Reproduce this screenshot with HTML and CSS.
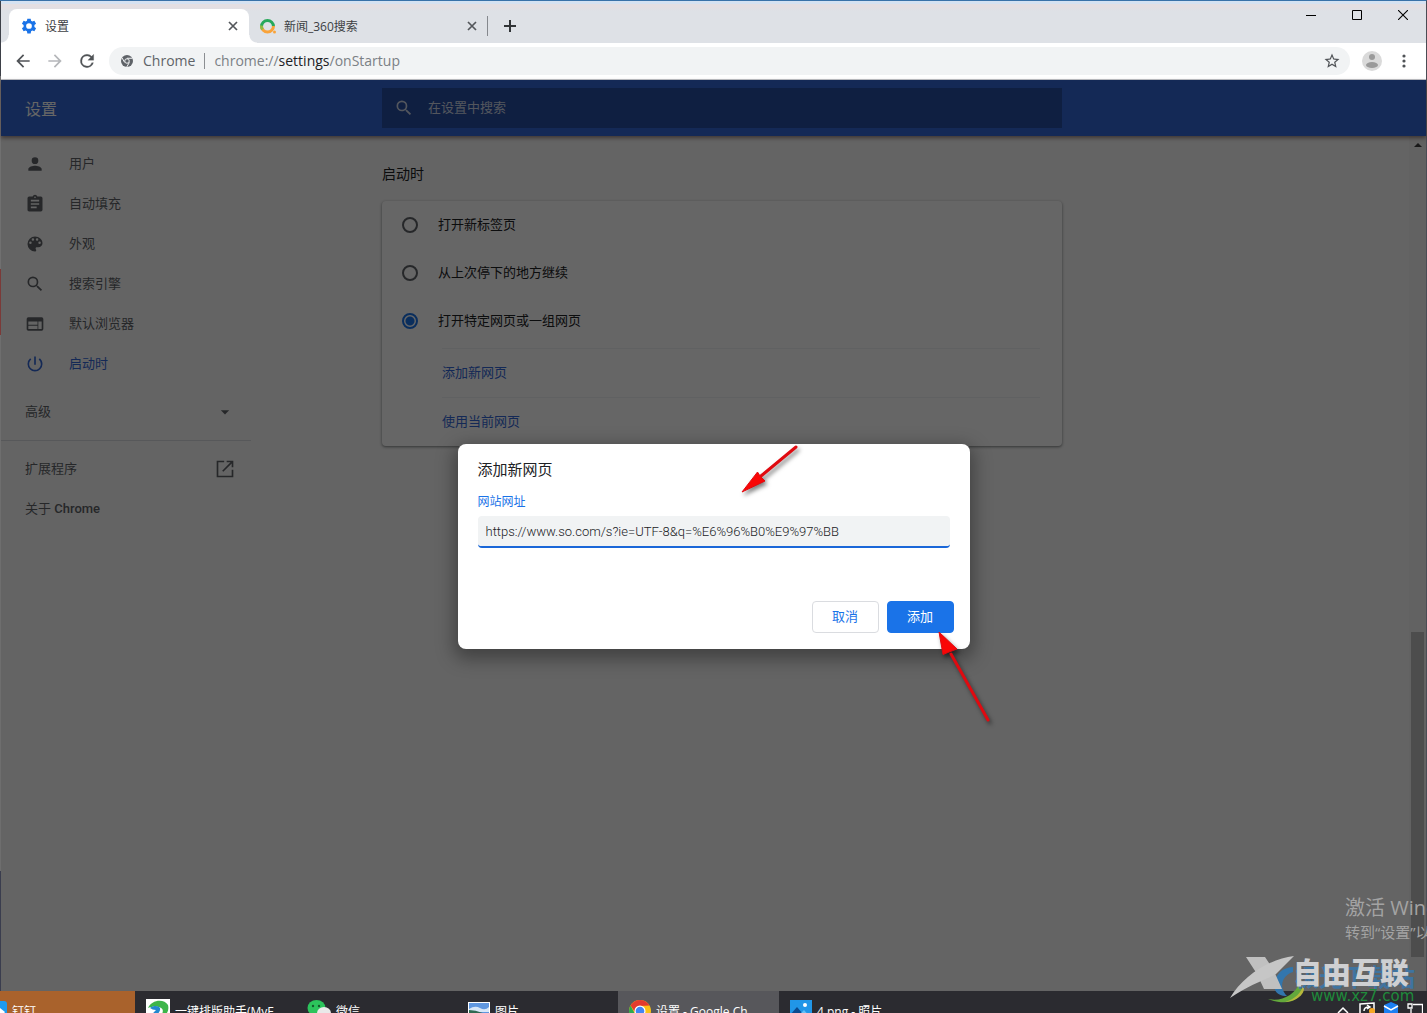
FILE: index.html
```html
<!DOCTYPE html>
<html lang="zh-CN">
<head>
<meta charset="utf-8">
<title>设置</title>
<link rel="stylesheet" href="styles.css">
</head>
<body>
<div class="window">
  <div class="tabstrip">
    <div class="tab tab-active">
      <svg class="icon16" viewBox="0 0 24 24"><path fill="#1a73e8" fill-rule="evenodd" d="M9.5 1h5l.6 3.2 1.9 1.1 3.1-1.1 2.5 4.3-2.5 2.1v2.8l2.5 2.1-2.5 4.3-3.1-1.1-1.9 1.1-.6 3.3h-5l-.6-3.3L7 18.7l-3.1 1.1-2.5-4.3 2.5-2.1v-2.8L1.400 8.500l2.500-4.300L7 5.300l1.900-1.100zM12 7.700a4.300 4.300 0 100 8.600 4.300 4.300 0 000-8.600z"/></svg>
      <span class="tab-title">设置</span>
      <button class="tab-close" aria-label="关闭"><svg width="10" height="10" viewBox="0 0 10 10"><path d="M1 1l8 8M9 1l-8 8" stroke="#54575b" stroke-width="1.700"/></svg></button>
    </div>
    <div class="tab">
      <svg class="icon16" viewBox="0 0 16 16"><g fill="none" stroke-width="3"><path d="M1.500 8.500a6 6 0 0112 0" stroke="#27a95b"/><path d="M1.500 8a6 6 0 0012 0" stroke="#f9a33a"/><path d="M1.500 7.500a6 6 0 001 4" stroke="#8dbb45"/></g><circle cx="14.500" cy="14" r="1.500" fill="#f9a33a"/></svg>
      <span class="tab-title">新闻_360搜索</span>
      <button class="tab-close" aria-label="关闭"><svg width="10" height="10" viewBox="0 0 10 10"><path d="M1 1l8 8M9 1l-8 8" stroke="#54575b" stroke-width="1.700"/></svg></button>
    </div>
    <span class="tab-sep"></span>
    <button class="new-tab" aria-label="新标签页"><svg width="12" height="12" viewBox="0 0 12 12"><path d="M6 0v12M0 6h12" stroke="#303336" stroke-width="2"/></svg></button>
    <div class="caption">
      <button aria-label="最小化"><svg width="10" height="10" viewBox="0 0 10 10"><path d="M0 5.500h10" stroke="#000"/></svg></button>
      <button aria-label="最大化"><svg width="10" height="10" viewBox="0 0 10 10"><path d="M.5.500h9v9h-9z" fill="none" stroke="#000"/></svg></button>
      <button aria-label="关闭窗口"><svg width="10" height="10" viewBox="0 0 10 10"><path d="M0 0l10 10M10 0L0 10" stroke="#000" stroke-width="1.100"/></svg></button>
    </div>
  </div>

  <div class="toolbar">
    <button class="nav" aria-label="后退"><svg width="20" height="20" viewBox="0 0 24 24"><path fill="#505357" d="M20 11H7.830l5.590-5.590L12 4l-8 8 8 8 1.410-1.410L7.830 13H20z"/></svg></button>
    <button class="nav" aria-label="前进"><svg width="20" height="20" viewBox="0 0 24 24"><path fill="#b5b7ba" d="M12 4l-1.410 1.410L16.170 11H4v2h12.170l-5.580 5.590L12 20l8-8z"/></svg></button>
    <button class="nav" aria-label="重新加载"><svg width="20" height="20" viewBox="0 0 24 24"><path fill="#505357" d="M17.650 6.350A7.960 7.960 0 0012 4a8 8 0 107.730 10h-2.080A6 6 0 1112 6c1.660 0 3.140.690 4.220 1.780L13 11h7V4z" stroke="#505357" stroke-width=".3"/></svg></button>
    <div class="omnibox">
      <svg width="12" height="12" viewBox="0 0 24 24"><circle cx="12" cy="12" r="12" fill="#5f6368"/><circle cx="12" cy="12" r="4.500" fill="#5f6368" stroke="#f1f3f4" stroke-width="2"/><path d="M12 6.500h11M7.200 14.800L2 5.500M16.800 14.800L11.500 24" stroke="#f1f3f4" stroke-width="2"/></svg>
      <span class="origin">Chrome</span>
      <span class="omni-sep"></span>
      <div class="url" role="textbox" aria-label="地址">chrome://<b>settings</b>/onStartup</div>
      <button class="star" aria-label="收藏"><svg width="18" height="18" viewBox="0 0 24 24"><path fill="#505357" d="M22 9.240l-7.190-.620L12 2 9.190 8.630 2 9.240l5.460 4.730L5.820 21 12 17.270 18.180 21l-1.630-7.030zM12 15.400l-3.760 2.270 1-4.280-3.320-2.880 4.380-.380L12 6.100l1.710 4.040 4.380.380-3.320 2.880 1 4.280z"/></svg></button>
    </div>
    <button class="avatar" aria-label="个人资料"><svg width="20" height="20" viewBox="0 0 20 20"><circle cx="10" cy="10" r="10" fill="#dadada"/><circle cx="10" cy="6" r="3" fill="#9a9a9a"/><ellipse cx="10" cy="14" rx="6" ry="3" fill="#9a9a9a"/></svg></button>
    <button class="menu" aria-label="菜单"><svg width="4" height="14" viewBox="0 0 4 14"><g fill="#505357"><circle cx="2" cy="2" r="1.600"/><circle cx="2" cy="7" r="1.600"/><circle cx="2" cy="12" r="1.600"/></g></svg></button>
  </div>

  <div class="page">
    <header class="columns header">
      <h1>设置</h1>
      <label class="search">
        <svg width="20" height="20" viewBox="0 0 24 24"><path fill="currentColor" d="M15.500 14h-.790l-.280-.270A6.470 6.470 0 0016 9.500 6.500 6.500 0 109.500 16c1.610 0 3.090-.590 4.230-1.570l.270.280v.790l5 4.990L20.490 19zm-6 0a4.500 4.500 0 110-9 4.500 4.500 0 010 9z"/></svg>
        <input type="search" placeholder="在设置中搜索" aria-label="在设置中搜索">
      </label>
    </header>

    <div class="columns body">
      <nav class="side">
        <a href="#people"><svg class="icon20" viewBox="0 0 24 24"><path d="M12 12a4 4 0 100-8 4 4 0 000 8zm0 2c-2.670 0-8 1.340-8 4v2h16v-2c0-2.660-5.330-4-8-4z"/></svg>用户</a>
        <a href="#autofill"><svg class="icon20" viewBox="0 0 24 24"><path d="M19 3h-4.180a3 3 0 00-5.640 0H5a2 2 0 00-2 2v14c0 1.100.9 2 2 2h14a2 2 0 002-2V5a2 2 0 00-2-2zm-7 0a1 1 0 110 2 1 1 0 010-2zm2 14H7v-2h7zm3-4H7v-2h10zm0-4H7V7h10z"/></svg>自动填充</a>
        <a href="#appearance"><svg class="icon20" viewBox="0 0 24 24"><path d="M12 3a9 9 0 000 18 1.500 1.500 0 001.500-1.500c0-.390-.150-.740-.390-1.010-.230-.260-.380-.610-.380-.990 0-.830.670-1.500 1.500-1.500H16a5 5 0 005-5c0-4.420-4.030-8-9-8zm-5.500 9a1.500 1.500 0 110-3 1.500 1.500 0 010 3zm3-4a1.500 1.500 0 110-3 1.500 1.500 0 010 3zm5 0a1.500 1.500 0 110-3 1.500 1.500 0 010 3zm3 4a1.500 1.500 0 110-3 1.500 1.500 0 010 3z"/></svg>外观</a>
        <a href="#search"><svg class="icon20" viewBox="0 0 24 24"><path d="M15.500 14h-.790l-.280-.270A6.470 6.470 0 0016 9.500 6.500 6.500 0 109.500 16c1.610 0 3.090-.590 4.230-1.570l.270.280v.790l5 4.990L20.490 19zm-6 0a4.500 4.500 0 110-9 4.500 4.500 0 010 9z"/></svg>搜索引擎</a>
        <a href="#default"><svg class="icon20" viewBox="0 0 24 24"><path d="M20 4H4a2 2 0 00-2 2v12c0 1.100.9 2 2 2h16a2 2 0 002-2V6a2 2 0 00-2-2zm-5 14H4v-4h11zm0-5H4V9h11zm5 5h-4V9h4z"/></svg>默认浏览器</a>
        <a href="#startup" class="current"><svg class="icon20" viewBox="0 0 24 24"><path d="M13 3h-2v10h2zm4.830 2.170l-1.420 1.420A6.920 6.920 0 0119 12a7 7 0 11-11.420-5.420L6.170 5.170A8.930 8.930 0 003 12a9 9 0 0018 0c0-2.740-1.230-5.180-3.170-6.830z"/></svg>启动时</a>
        <button class="advanced">高级<svg class="icon20" viewBox="0 0 24 24"><path d="M7 10l5 5 5-5z"/></svg></button>
        <hr>
        <a href="#extensions" class="plain">扩展程序<svg class="icon20" viewBox="0 0 24 24"><path d="M20 20H4V4h7V2H2v20h20v-9h-2zM14 2v2h4.600l-10 10L10 15.400l10-10V10h2V2z"/></svg></a>
        <a href="#about" class="plain"><span>关于 <b>Chrome</b></span></a>
      </nav>

      <main>
        <h2>启动时</h2>
        <div class="card">
          <label class="option"><input type="radio" name="startup">打开新标签页</label>
          <label class="option"><input type="radio" name="startup">从上次停下的地方继续</label>
          <label class="option"><input type="radio" name="startup" checked>打开特定网页或一组网页</label>
          <div class="sites">
            <div class="site"><a href="#add">添加新网页</a></div>
            <div class="site"><a href="#use">使用当前网页</a></div>
          </div>
        </div>
      </main>

      <div class="scrollbar">
        <svg width="8" height="5" viewBox="0 0 8 5"><path d="M0 5l4-4 4 4z" fill="#404040"/></svg>
        <div class="thumb"></div>
      </div>
    </div>

    <div class="backdrop">
      <form class="dialog" role="dialog" aria-labelledby="dlg-title">
        <h3 id="dlg-title">添加新网页</h3>
        <label for="site-url">网站网址</label>
        <input id="site-url" type="text" value="https://www.so.com/s?ie=UTF-8&amp;q=%E6%96%B0%E9%97%BB">
        <div class="actions">
          <button type="button">取消</button>
          <button type="button" class="primary">添加</button>
        </div>
        <svg class="arrows" width="560" height="300" viewBox="0 0 560 300">
          <g fill="#f90606" stroke="#e00a10">
            <path d="M338 3L303 32" stroke-width="3" stroke-linecap="round"/>
            <path d="M284 48L299.500 28 302 32 307 37z" stroke-width="1"/>
            <path d="M530 276L493 210" stroke-width="3" stroke-linecap="round"/>
            <path d="M481 188L485 210.500 491 208 499 205z" stroke-width="1"/>
          </g>
        </svg>
      </form>
    </div>
  </div>
</div>

<div class="taskbar">
  <div class="task task-first"><svg width="7" height="20" viewBox="0 0 7 20"><path d="M0 0h4q3 0 3 3v17H0z" fill="#1e9bf0"/><path d="M0 7l5 4-3 4H0z" fill="#fff"/></svg><span>钉钉</span></div>
  <div class="task"><svg width="24" height="24" viewBox="0 0 24 24"><path fill="#fff" d="M0 0h24v24H0z"/><path d="M2 9C5 1 18-1 22 6c2 7-4 14-12 16 6-5 9-11 5-13-3-2-8-2-13 0z" fill="#3db54a"/><path d="M4 9c4-3 9-2 10 0 1 4-4 8-11 14 1-6 4-9 7-12-3 0-4-1-6-2z" fill="#2388cf"/></svg><span>一键排版助手(MyE</span></div>
  <div class="task"><svg width="24" height="24" viewBox="0 0 24 24"><ellipse cx="9.500" cy="9" rx="9" ry="8" fill="#2cc45c"/><circle cx="6" cy="7" r="1.200" fill="#145c2d"/><circle cx="12" cy="7" r="1.200" fill="#145c2d"/><ellipse cx="17" cy="14" rx="7" ry="6" fill="#e9e9e9"/></svg><span>微信</span></div>
  <div class="task"><svg width="22" height="18" viewBox="0 0 22 18"><path fill="#fff" d="M0 0h22v18H0z"/><path fill="#5f97e0" d="M1 1h20v16H1z"/><path fill="#d7e7f8" d="M1 7q6-4 11-1t9-1v5H1z"/><path fill="#2f6a52" d="M1 8q9 0 20 6v3H1z"/></svg><span>图片</span></div>
  <div class="task task-active"><svg width="22" height="22" viewBox="0 0 22 22"><circle cx="11" cy="11" r="11" fill="#fbc116"/><path d="M1.500 5.500A11 11 0 0120.500 5.500L11 6 6 12z" fill="#e33b2e"/><path d="M1.500 5.500A11 11 0 0011 22l5-8H6z" fill="#2da94f"/><circle cx="11" cy="11" r="5.500" fill="#fff"/><circle cx="11" cy="11" r="4.300" fill="#4285f4"/></svg><span>设置 - Google Ch</span></div>
  <div class="task"><svg width="22" height="22" viewBox="0 0 22 22"><path fill="#2196e8" d="M0 0h22v22H0z"/><path fill="#0b4a8f" d="M0 15l7-8 13 15H0z"/><path fill="#63c1f7" d="M10 14l4-4 8 9v3h-6z"/><circle cx="15" cy="5" r="2" fill="#fff"/></svg><span>4.png - 照片</span></div>
  <div class="tray">
    <svg width="16" height="20" viewBox="0 0 16 20"><path d="M3 12l5-5 5 5" fill="none" stroke="#fff" stroke-width="1.500"/></svg>
    <svg width="16" height="20" viewBox="0 0 16 20"><path d="M1 3l14-1v16H1z" fill="none" stroke="#fff" stroke-width="1.500"/><path d="M5 10q0-4 5-4M8 4l3 2-3 2" fill="none" stroke="#fff" stroke-width="1.500"/><circle cx="13" cy="10" r="3" fill="#f5a623"/></svg>
    <svg width="16" height="20" viewBox="0 0 16 20"><path d="M8 1l7 3v8l-7 4-7-4V4z" fill="#1c7ff2"/><path d="M1 5l7 4 7-4" fill="none" stroke="#fff" stroke-width="1.500"/></svg>
    <svg width="16" height="20" viewBox="0 0 16 20"><path d="M6 3.500h9.500V15H4V8M1 3h4v4H1z" fill="none" stroke="#fff" stroke-width="1.300"/></svg>
  </div>
</div>

<div class="activate"><p class="activate-big">激活 Windows</p><p>转到“设置”以激活</p></div>

<svg class="brand" width="200" height="56" viewBox="0 0 200 56">
  <path d="M64 15C50 16 44 26 46 38c2 4 6 6 12 6C50 36 52 24 64 20z" fill="#3276ad"/>
  <path d="M39 47c14 3 26-4 32-16 6 14-8 25-32 16z" fill="#63a83c"/>
  <path d="M56 50c10-3 17-9 18-18 4 8-4 17-18 18z" fill="#b6b83c"/>
  <text class="brand-ghost" x="66" y="34">极光下载站</text>
  <path d="M17 5h19l8 12 9 20H35l-7-15z" fill="#c0c0c0"/>
  <path d="M65 4C40 7 14 24 1 46 20 33 34 29 47 22z" fill="#c6c6c6"/>
  <text class="brand-name" x="64" y="32">自由互联</text>
  <text class="brand-url" x="82" y="49">www.xz7.com</text>
</svg>
</body>
</html>
```
FILE: styles.css
```css
* { box-sizing: border-box; }

body {
  margin: 0;
  height: 100vh;
  display: flex;
  flex-direction: column;
  position: relative;
  overflow: hidden;
  background: #26262a;
  font-family: Roboto, "Noto Sans CJK SC", sans-serif;
  font-size: 13px;
}

button {
  border: 0;
  padding: 0;
  background: none;
  font: inherit;
  display: flex;
  align-items: center;
  justify-content: center;
}

a { text-decoration: none; color: inherit; }
h1, h2, h3, p { margin: 0; font-weight: inherit; }
svg { flex: none; }

.window {
  flex: 1;
  min-height: 0;
  display: flex;
  flex-direction: column;
  border-top: 1px solid #3a72a8;
  border-right: 1px solid #4a4c54;
  padding-left: 1px;
  background: linear-gradient(#3d4048 0 75px, #707070 75px 268px, #7b3a38 268px 334px, #6e6e6e 334px 870px, #3a3d4e 870px);
}

/* Tab strip */
.tabstrip {
  flex: none;
  height: 42px;
  display: flex;
  align-items: flex-end;
  padding-left: 8px;
  background: linear-gradient(#d6e2f1 0 3px, #e4dfe2 3px 6px, #dee1e6 10px);
  font-family: "Open Sans", "Noto Sans CJK SC", sans-serif;
  font-size: 12px;
  color: #3c4043;
}

.tab {
  width: 238px;
  height: 34px;
  display: flex;
  align-items: center;
  padding: 0 9px 0 11px;
  gap: 8px;
}

.tab-active {
  position: relative;
  width: 240px;
  padding: 0 10px 0 12px;
  background: #fff;
  border-radius: 8px 8px 0 0;
}

/* Flared feet of the active tab */
.tab-active::before,
.tab-active::after {
  content: "";
  position: absolute;
  bottom: 0;
  width: 8px;
  height: 8px;
}
.tab-active::before { right: 100%; background: radial-gradient(circle at 0 0, transparent 7px, #fff 8px); }
.tab-active::after { left: 100%; background: radial-gradient(circle at 100% 0, transparent 7px, #fff 8px); }

.icon16 { width: 16px; height: 16px; }
.tab-title { flex: 1; }
.tab-close { width: 12px; height: 16px; }
.tab-sep { width: 1px; height: 20px; margin-bottom: 7px; background: #85888d; }
.new-tab { width: 28px; height: 34px; margin-left: 8px; }

.caption {
  align-self: flex-start;
  margin-left: auto;
  display: flex;
}
.caption button { width: 46px; height: 28px; }

/* Toolbar */
.toolbar {
  flex: none;
  height: 37px;
  display: flex;
  align-items: center;
  padding: 0 8px 0 6px;
  background: #fff;
  border-bottom: 1px solid #c0c3c8;
}

.nav { width: 32px; height: 28px; }

.omnibox {
  flex: 1;
  height: 28px;
  margin-left: 6px;
  padding: 0 9px 0 12px;
  display: flex;
  align-items: center;
  border-radius: 14px;
  background: #f1f3f4;
  font-family: "Open Sans", sans-serif;
  font-size: 14px;
  color: #7b8085;
}

.origin, .url { padding-bottom: 2px; }
.origin { margin-left: 10px; color: #5f6368; }
.omni-sep { width: 1px; height: 16px; margin: 0 9px; background: #8b8e92; }
.url { flex: 1; }
.url b { font-weight: 400; color: #202124; }
.star { width: 18px; }
.avatar { margin-left: 12px; }
.menu { width: 28px; height: 28px; margin-left: 8px; }

/* Settings page */
.page {
  flex: 1;
  min-height: 0;
  position: relative;
  display: flex;
  flex-direction: column;
  background: #fafafa;
}

.columns {
  display: grid;
  grid-template-columns: 381fr minmax(0, 680px) 364fr;
}

.header {
  flex: none;
  height: 56px;
  align-items: center;
  background: #3367d6;
  box-shadow: 0 2px 4px rgba(60, 20, 10, .5);
  z-index: 1;
}

.header h1 { padding-left: 24px; font-size: 16px; color: #fff; }

.search {
  height: 40px;
  display: flex;
  align-items: center;
  padding: 0 12px;
  gap: 14px;
  background: #274fa4;
  color: #d0d8e8;
}

.search input {
  flex: 1;
  border: 0;
  padding: 0 0 2px;
  outline: 0;
  background: none;
  font: inherit;
  color: inherit;
}
.search input::placeholder { color: inherit; opacity: 1; }

.body { flex: 1; min-height: 0; }

.side {
  width: 250px;
  padding-top: 8px;
  color: #5f6368;
}

.side a, .advanced {
  width: 100%;
  height: 40px;
  display: flex;
  align-items: center;
  gap: 24px;
  padding: 0 16px 4px 24px;
  color: inherit;
}

.side .plain, .side .advanced { justify-content: space-between; }
.side b { font-weight: 500; }
.side .current { color: #3367d6; }
.side .advanced { margin-top: 8px; }
.side hr { height: 1px; margin: 8px 0; border: 0; background: #dadce0; }
.icon20 { width: 20px; height: 20px; margin-top: 4px; fill: currentColor; }

main { padding-top: 27px; }
main h2 { font-size: 14px; line-height: 22px; color: #202124; }

.card {
  margin-top: 16px;
  border-radius: 4px;
  background: #fff;
  box-shadow: 0 1px 2px rgba(60, 64, 67, .4), 0 1px 3px 1px rgba(60, 64, 67, .2);
}

.option {
  height: 48px;
  display: flex;
  align-items: center;
  padding: 0 0 4px 20px;
  gap: 20px;
  color: #202124;
}

.option input {
  appearance: none;
  width: 16px;
  height: 16px;
  margin: 4px 0 0;
  border: 2px solid #5f6368;
  border-radius: 50%;
}

.option input:checked {
  border-color: #1a73e8;
  background: radial-gradient(#1a73e8 0 4px, transparent 5px);
}

.sites { padding: 3px 22px 0 60px; color: #3367d6; }

.site {
  height: 49px;
  display: flex;
  align-items: center;
  padding-bottom: 4px;
  border-top: 1px solid #f1f3f4;
}

.scrollbar {
  justify-self: end;
  width: 17px;
  padding: 6px 2px 34px;
  display: flex;
  flex-direction: column;
  align-items: center;
  background: #f4f4f4;
}

.thumb {
  width: 13px;
  height: 325px;
  margin-top: auto;
  background: #c1c1c1;
}

/* Dialog */
.backdrop {
  position: absolute;
  inset: 0;
  z-index: 2;
  display: flex;
  align-items: center;
  justify-content: center;
  padding-top: 22px;
  background: rgba(0, 0, 0, .6);
}

.dialog {
  position: relative;
  width: 512px;
  padding: 16px 16px 16px 20px;
  display: flex;
  flex-direction: column;
  border-radius: 8px;
  background: #fff;
  box-shadow: 0 6px 18px 4px rgba(0, 0, 0, .35);
}

.dialog h3 { font-size: 15px; line-height: 20px; color: #202124; }

.dialog label {
  margin-top: 14px;
  font-size: 12px;
  line-height: 16px;
  color: #1a73e8;
}

.dialog input {
  height: 32px;
  margin: 6px 4px 0 0;
  padding: 0 8px;
  border: 0;
  border-bottom: 2px solid #1a67d8;
  border-radius: 4px;
  outline: 0;
  background: #f1f3f4;
  font: inherit;
  font-weight: 300;
  color: #202124;
}

.actions {
  display: flex;
  justify-content: flex-end;
  gap: 8px;
  margin-top: 53px;
}

.actions button {
  width: 67px;
  height: 32px;
  padding-bottom: 4px;
  border: 1px solid #dadce0;
  border-radius: 4px;
  color: #1a73e8;
}

.actions .primary { border-color: #1a73e8; background: #1a73e8; color: #fff; }

.arrows {
  position: absolute;
  left: 0;
  top: 0;
  pointer-events: none;
  filter: drop-shadow(2px 3px 2px rgba(0, 0, 0, .5));
}

/* Taskbar: its lower part runs off the screen */
.taskbar {
  flex: none;
  height: 22px;
  display: flex;
  align-items: flex-start;
  overflow: hidden;
  background: #2b2b30;
  font-family: "Open Sans", "Noto Sans CJK SC", sans-serif;
  font-size: 12px;
  color: #fff;
}

.task {
  flex: 0 1 161px;
  height: 40px;
  display: flex;
  align-items: center;
  padding-left: 11px;
  gap: 5px;
  white-space: nowrap;
}

.task-first { flex-basis: 135px; padding-left: 0; background: #a9622c; }
.task-active { background: #57575b; }
.tray { margin-left: auto; display: flex; gap: 8px; padding: 10px 4px 0 0; }

/* Desktop marks lying over the window */
.activate {
  position: absolute;
  right: 0;
  bottom: 70px;
  z-index: 3;
  width: 82px;
  overflow: hidden;
  white-space: nowrap;
  font-family: "Open Sans", "Noto Sans CJK SC", sans-serif;
  font-size: 15px;
  line-height: 22px;
  color: #a3a3a3;
}
.activate-big { font-size: 20px; line-height: 26px; }

.brand {
  position: absolute;
  right: -2px;
  bottom: 5px;
  z-index: 3;
  overflow: visible;
}
.brand-name { font: 900 29px "Noto Sans CJK SC", sans-serif; fill: #cfd0d2; }
.brand-ghost { font: 700 24px "Noto Sans CJK SC", sans-serif; fill: #3f74a0; }
.brand-url { font: 400 15px "DejaVu Sans", sans-serif; fill: #1f8a3b; }
```
